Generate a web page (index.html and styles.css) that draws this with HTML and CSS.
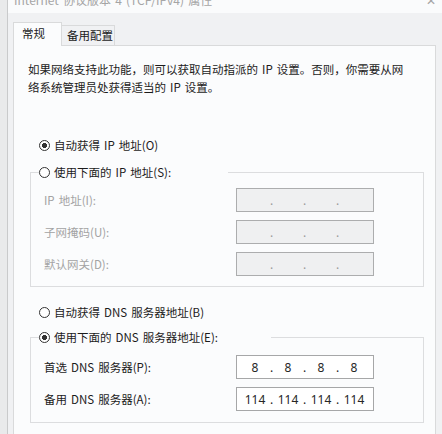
FILE: index.html
```html
<!DOCTYPE html>
<html lang="zh-CN">
<head>
    <meta charset="UTF-8">
    <meta name="viewport" content="width=device-width, initial-scale=1.0">
    <title>Internet 协议版本 4 (TCP/IPv4) 属性</title>
    <link rel="stylesheet" href="styles.css">
</head>
<body>
    <div class="window">
        <div class="titlebar">
            <span class="title">Internet 协议版本 4 (TCP/IPv4) 属性</span>
            <span class="close">✕</span>
        </div>

        <div class="tabs">
            <div class="tab active">常规</div>
            <div class="tab">备用配置</div>
        </div>

        <div class="panel">
            <p class="intro">如果网络支持此功能，则可以获取自动指派的 IP 设置。否则，你需要从网<br>络系统管理员处获得适当的 IP 设置。</p>

            <div class="radio-row first"><span class="radio checked"></span>自动获得 IP 地址(O)</div>

            <fieldset class="group">
                <legend class="radio-row legend-ip"><span class="radio"></span>使用下面的 IP 地址(S):</legend>
                <div class="field disabled">
                    <span class="field-label">IP 地址(I):</span>
                    <div class="ip-box"><span class="octet"></span><span class="dot">.</span><span class="octet"></span><span class="dot">.</span><span class="octet"></span><span class="dot">.</span><span class="octet"></span></div>
                </div>
                <div class="field disabled">
                    <span class="field-label">子网掩码(U):</span>
                    <div class="ip-box"><span class="octet"></span><span class="dot">.</span><span class="octet"></span><span class="dot">.</span><span class="octet"></span><span class="dot">.</span><span class="octet"></span></div>
                </div>
                <div class="field disabled">
                    <span class="field-label">默认网关(D):</span>
                    <div class="ip-box"><span class="octet"></span><span class="dot">.</span><span class="octet"></span><span class="dot">.</span><span class="octet"></span><span class="dot">.</span><span class="octet"></span></div>
                </div>
            </fieldset>

            <div class="radio-row dns-auto"><span class="radio"></span>自动获得 DNS 服务器地址(B)</div>

            <fieldset class="group dns">
                <legend class="radio-row legend-dns"><span class="radio checked"></span>使用下面的 DNS 服务器地址(E):</legend>
                <div class="field">
                    <span class="field-label">首选 DNS 服务器(P):</span>
                    <div class="ip-box"><span class="octet">8</span><span class="dot">.</span><span class="octet">8</span><span class="dot">.</span><span class="octet">8</span><span class="dot">.</span><span class="octet">8</span></div>
                </div>
                <div class="field">
                    <span class="field-label">备用 DNS 服务器(A):</span>
                    <div class="ip-box"><span class="octet">114</span><span class="dot">.</span><span class="octet">114</span><span class="dot">.</span><span class="octet">114</span><span class="dot">.</span><span class="octet">114</span></div>
                </div>
            </fieldset>
        </div>
    </div>
</body>
</html>
```

FILE: styles.css
```css
body {
    margin: 0;
    background-color: #e9eaeb;
    font-family: "Noto Sans CJK SC", sans-serif;
    font-size: 11.5px;
    word-spacing: 1.5px;
    color: #1b1b1b;
    height: 434px;
    overflow: hidden;
}

.window {
    margin-left: 7px;
    border-left: 1px solid #c9cacb;
    background-color: #f0f1f3;
    height: 434px;
}

.titlebar {
    height: 13px;
    overflow: hidden;
    background-color: #fafbfc;
    display: flex;
    justify-content: space-between;
    padding: 0 6px;
    color: #a5a5a5;
    font-size: 12px;
    line-height: 16px;
}

.title,
.close {
    margin-top: -8px;
}

.tabs {
    display: flex;
    align-items: flex-start;
    padding: 9px 0 0 5px;
    margin-bottom: -1px;
}

.tab {
    box-sizing: border-box;
    height: 20px;
    margin-top: 3px;
    padding-left: 5px;
    width: 53px;
    line-height: 18px;
    border: 1px solid #d9dadb;
    border-left: none;
    border-bottom: none;
    background-color: #f0f1f3;
}

.tab.active {
    position: relative;
    width: 49px;
    height: 24px;
    margin-top: 0;
    padding-left: 8px;
    line-height: 21px;
    border-left: 1px solid #d9dadb;
    background-color: #fbfcfd;
}

.panel {
    margin: 0 6px 0 5px;
    height: 400px;
    padding: 0 11px 0 14px;
    border: 1px solid #d9dadb;
    background-color: #fbfcfd;
}

.intro {
    margin: 14px 0 0 0;
    line-height: 18px;
}

.radio-row {
    display: flex;
    align-items: center;
    gap: 4px;
    height: 18px;
    padding-left: 11px;
}

.radio-row.first {
    margin-top: 40px;
}

.radio-row.dns-auto {
    margin-top: 16px;
}

.radio {
    box-sizing: border-box;
    width: 11px;
    height: 11px;
    border: 1px solid #333;
    border-radius: 50%;
    background-color: #fff;
}

.radio.checked {
    background: radial-gradient(circle, #333 0 2.3px, #fff 2.8px);
}

.group {
    margin: 9px 0 0 2px;
    padding: 7px 0 10px 8px;
    border: 1px solid #dcdddf;
}

.group.dns {
    margin-top: 7px;
    padding-top: 9px;
    padding-bottom: 11px;
}

.group legend {
    padding: 0;
}

.legend-ip {
    width: 189px;
}

.legend-dns {
    width: 232px;
}

.field {
    display: flex;
    align-items: center;
    height: 24px;
    padding-left: 5px;
    margin-bottom: 8px;
}

.field:last-child {
    margin-bottom: 0;
}

.field-label {
    width: 192px;
}

.field.disabled .field-label {
    color: #a3a3a3;
}

.ip-box {
    box-sizing: border-box;
    display: flex;
    align-items: center;
    width: 138px;
    height: 24px;
    padding-left: 4px;
    border: 1px solid #a6a7a8;
    background-color: #fff;
    font-family: "Noto Sans", sans-serif;
    font-size: 12px;
    word-spacing: 0;
    color: #262626;
}

.field.disabled .ip-box {
    background-color: #eff0f1;
    border-color: #acadae;
    color: #9a9a9a;
}

.octet {
    width: 28px;
    text-align: center;
}

.dot {
    width: 5px;
    text-align: center;
}
```
